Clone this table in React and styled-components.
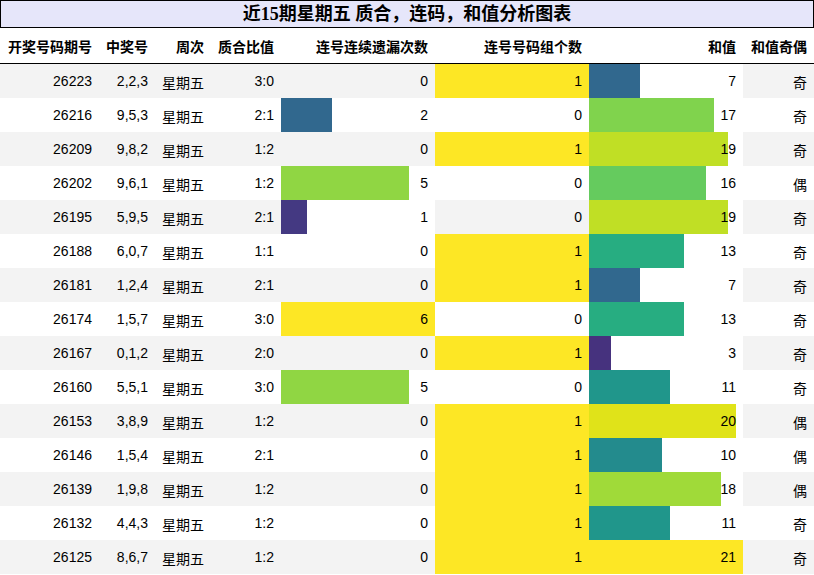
import React from 'react'
import styled, { createGlobalStyle } from 'styled-components'

const GlobalStyle = createGlobalStyle`
  html, body {
    margin: 0;
    padding: 0;
    background: #fff;
  }
  body {
    font-family: "Liberation Sans", "Noto Sans CJK SC", sans-serif;
    color: #000;
  }
`

const rows = [
  ['26223', '2,2,3', '3:0', 0, 1, 7, '奇'],
  ['26216', '9,5,3', '2:1', 2, 0, 17, '奇'],
  ['26209', '9,8,2', '1:2', 0, 1, 19, '奇'],
  ['26202', '9,6,1', '1:2', 5, 0, 16, '偶'],
  ['26195', '5,9,5', '2:1', 1, 0, 19, '奇'],
  ['26188', '6,0,7', '1:1', 0, 1, 13, '奇'],
  ['26181', '1,2,4', '2:1', 0, 1, 7, '奇'],
  ['26174', '1,5,7', '3:0', 6, 0, 13, '奇'],
  ['26167', '0,1,2', '2:0', 0, 1, 3, '奇'],
  ['26160', '5,5,1', '3:0', 5, 0, 11, '奇'],
  ['26153', '3,8,9', '1:2', 0, 1, 20, '偶'],
  ['26146', '1,5,4', '2:1', 0, 1, 10, '偶'],
  ['26139', '1,9,8', '1:2', 0, 1, 18, '偶'],
  ['26132', '4,4,3', '1:2', 0, 1, 11, '奇'],
  ['26125', '8,6,7', '1:2', 0, 1, 21, '奇'],
]

const headers = ['开奖号码期号', '中奖号', '周次', '质合比值', '连号连续遗漏次数', '连号号码组个数', '和值', '和值奇偶']

// viridis stops every 0.05
const stops = [
  '#440154', '#471365', '#482475', '#463480', '#414487', '#3b528b', '#355f8d',
  '#2f6c8e', '#2a788e', '#25848e', '#21918c', '#1e9c89', '#22a884', '#2fb47c',
  '#44bf70', '#5ec962', '#7ad151', '#9bd93c', '#bddf26', '#dfe318', '#fde725',
]

const hex = (h) => [1, 3, 5].map((i) => parseInt(h.slice(i, i + 2), 16))

function viridis(t) {
  const x = Math.max(0, Math.min(1, t)) * (stops.length - 1)
  const i = Math.min(Math.floor(x), stops.length - 2)
  const f = x - i
  const a = hex(stops[i])
  const b = hex(stops[i + 1])
  const c = a.map((v, k) => Math.round(v + (b[k] - v) * f))
  return `rgb(${c.join(',')})`
}

const max5 = Math.max(...rows.map((r) => r[3]))
const max6 = Math.max(...rows.map((r) => r[4]))
const max7 = Math.max(...rows.map((r) => r[5]))

function barStyle(v, max) {
  if (!v) return undefined
  const pct = (v / max) * 100
  const col = viridis(v / max)
  return { background: `linear-gradient(90deg, ${col} ${pct}%, transparent ${pct}%)` }
}

const Page = styled.div`
  width: 814px;
`

const Title = styled.div`
  border: 1px solid #000;
  background: #e6e6fa;
  height: 26px;
  line-height: 26px;
  text-align: center;
  font-family: "Liberation Serif", "Noto Sans CJK SC", serif;
  font-weight: bold;
  font-size: 18px;
`

const Grid = styled.div`
  display: grid;
  grid-template-columns: 99px 56px 56px 70px 154px 154px 154px 71px;
`

const HeadRow = styled.div`
  display: contents;
`

const HeadCell = styled.div`
  height: 35px;
  border-bottom: 1px solid #000;
  display: flex;
  align-items: center;
  justify-content: flex-end;
  padding-right: 7px;
  font-weight: bold;
  font-size: 14px;
  white-space: nowrap;
`

const Row = styled.div`
  display: contents;
  & > div {
    background-color: ${(p) => (p.$odd ? '#f3f3f3' : '#fff')};
  }
`

const Cell = styled.div`
  height: 34px;
  display: flex;
  align-items: center;
  justify-content: flex-end;
  padding-right: 7px;
  font-size: 14px;
  white-space: nowrap;
  padding-top: ${(p) => (p.$cjk ? '2px' : '0')};
  box-sizing: border-box;
`

export default function App() {
  return (
    <Page>
      <GlobalStyle />
      <Title>近15期星期五 质合，连码，和值分析图表</Title>
      <Grid>
        <HeadRow>
          {headers.map((h) => (
            <HeadCell key={h}>{h}</HeadCell>
          ))}
        </HeadRow>
        {rows.map((r, i) => (
          <Row key={r[0]} $odd={i % 2 === 0}>
            <Cell>{r[0]}</Cell>
            <Cell>{r[1]}</Cell>
            <Cell $cjk>星期五</Cell>
            <Cell>{r[2]}</Cell>
            <Cell style={barStyle(r[3], max5)}>{r[3]}</Cell>
            <Cell style={barStyle(r[4], max6)}>{r[4]}</Cell>
            <Cell style={barStyle(r[5], max7)}>{r[5]}</Cell>
            <Cell $cjk>{r[6]}</Cell>
          </Row>
        ))}
      </Grid>
    </Page>
  )
}
